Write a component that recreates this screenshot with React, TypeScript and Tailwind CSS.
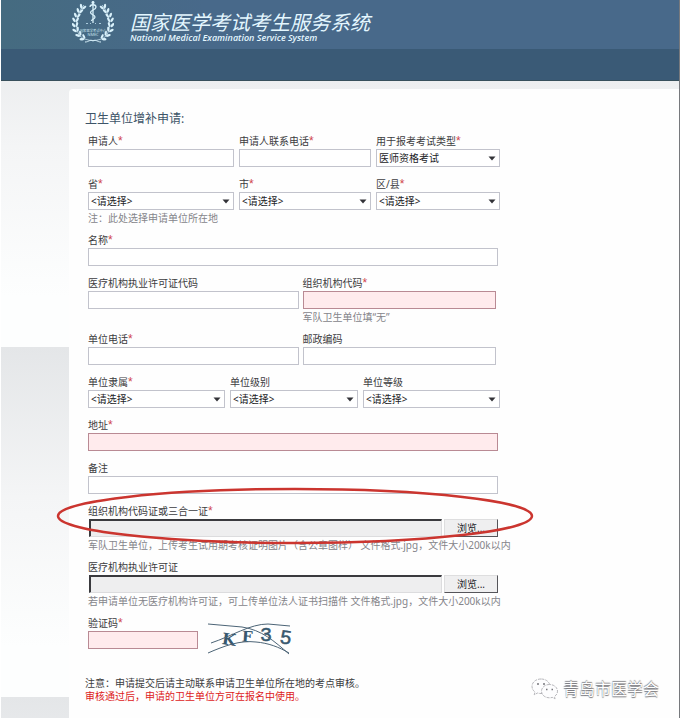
import React, { useRef, useState } from 'react';

interface FieldProps {
  id: string;
  label: string;
  required?: boolean;
  note?: string;
  children: React.ReactNode;
}

const Field: React.FC<FieldProps> = ({ id, label, required, note, children }) => (
  <div className="flex flex-col min-w-0">
    <label htmlFor={id} className="h-4 leading-4 whitespace-nowrap text-[#3c3c40]">
      {label}
      {required && <span className="font-['Liberation_Sans',sans-serif] text-[12px] leading-3 text-[#d0454c]">*</span>}
    </label>
    {children}
    {note && <p className="h-[13px] leading-4 whitespace-nowrap text-[#85858a]">{note}</p>}
  </div>
);

const TextField = ({ invalid, className = '', ...field }: Omit<FieldProps, 'children'> & { invalid?: boolean; className?: string }) => (
  <Field {...field}>
    <input
      id={field.id}
      type="text"
      className={`h-[18px] w-full border px-1 outline-none ${
        invalid ? 'border-[#b98a94] bg-[#ffebed]' : 'border-[#c2c3cc] bg-white'
      } ${className}`}
    />
  </Field>
);

const SelectField = ({ options = ['<请选择>'], ...field }: Omit<FieldProps, 'children'> & { options?: string[] }) => (
  <Field {...field}>
    <div className="relative">
      <select
        id={field.id}
        className="block h-[18px] w-full appearance-none border border-[#c2c3cc] bg-white pl-0.5 pr-4 leading-4 text-[#222226] outline-none"
      >
        {options.map((o) => (
          <option key={o}>{o}</option>
        ))}
      </select>
      <svg className="pointer-events-none absolute right-1 top-[7px]" width="8" height="5" viewBox="0 0 8 5">
        <path d="M0.5 0.5h7L4 4.5z" fill="#333338" />
      </svg>
    </div>
  </Field>
);

const FileField = (field: Omit<FieldProps, 'children'>) => {
  const picker = useRef<HTMLInputElement>(null);
  const [name, setName] = useState('');

  return (
    <Field {...field}>
      <div className="flex h-[18px] gap-0.5 pl-px">
        <input
          id={field.id}
          type="text"
          readOnly
          value={name}
          className="min-w-0 flex-1 border-l-2 border-t-2 border-b border-r border-b-[#dcdcde] border-r-[#dcdcde] border-l-[#3a3a3e] border-t-[#3a3a3e] bg-[#eeeeef] px-1 outline-none"
        />
        <button
          type="button"
          onClick={() => picker.current?.click()}
          className="w-[54px] border border-b-[#55555a] border-r-[#55555a] border-l-[#dededf] border-t-[#dededf] bg-[#efeff0] leading-4 text-[#222226]"
        >
          浏览...
        </button>
        <input ref={picker} type="file" hidden onChange={(e) => setName(e.target.files?.[0]?.name ?? '')} />
      </div>
    </Field>
  );
};

// left half of the wreath, mirrored for the right one
const leaves = [
  [10.5, 7, 20],
  [7.5, 11, 12],
  [5, 15.5, 6],
  [3.6, 20, -4],
  [3.2, 25, -14],
  [4.2, 30, -28],
  [7, 34.5, -44],
  [11, 38, -60],
];

const Wreath = () => (
  <g>
    <path d="M12 5C4 14 2 28 8 36c3 3 8 4.500 13 4.500" fill="none" stroke="#d9f1fb" strokeWidth="0.700" />
    {leaves.map(([x, y, a]) => (
      <g key={y} transform={`translate(${x} ${y}) rotate(${a})`}>
        <ellipse cx="-1.300" cy="-1" rx="1.200" ry="2.500" transform="rotate(-28)" />
        <ellipse cx="1.500" cy="-1" rx="1.100" ry="2.500" transform="rotate(32)" />
      </g>
    ))}
  </g>
);

const Logo = () => (
  <svg width="42" height="44" viewBox="0 0 42 44" fill="#d9f1fb" aria-hidden="true">
    <Wreath />
    <g transform="translate(42 0) scale(-1 1)">
      <Wreath />
    </g>
    <path d="M21 1v22" stroke="#d9f1fb" strokeWidth="1.300" />
    <circle cx="21" cy="2.500" r="1.500" />
    <path
      d="M18 7c0-3 6-3 6 0s-5.500 3-5.500 5.500 4.500 2 4.500 4.500-3.500 2-3.500 4"
      fill="none"
      stroke="#d9f1fb"
      strokeWidth="1.300"
    />
    <path d="M14 23.500h2M18 23.500h1M23 23.500h1M27 23.500h2" stroke="#a9cbdc" strokeWidth="1" />
    <text x="21" y="31.500" textAnchor="middle" fontSize="3.300" fill="#c4e0ec">国家医学考试中心</text>
    <text x="21" y="36" textAnchor="middle" fontSize="3.800" fill="#c4e0ec">NMEC</text>
    <path d="M13 42c4 0 5-3 8-1 3-2 4 1 8 1" fill="none" stroke="#d9f1fb" strokeWidth="1" />
  </svg>
);

const Captcha = () => (
  <svg width="84" height="36" viewBox="0 0 84 36" role="img" aria-label="验证码图片" className="font-['Liberation_Mono',monospace]">
    <g fill="#38586e" fontSize="20" fontWeight="bold">
      <text x="14" y="24" fontFamily="DejaVu Serif" fontSize="16" transform="rotate(8 20 18)">K</text>
      <text x="34" y="21" fontFamily="DejaVu Serif" fontSize="15" transform="rotate(4 41 15)">F</text>
      <text x="52" y="20" fontWeight="normal" stroke="#38586e" strokeWidth="0.500">3</text>
      <text x="72" y="23" fontWeight="normal" stroke="#38586e" strokeWidth="0.500" transform="rotate(8 78 16)">5</text>
    </g>
    <g fill="none" stroke="#4c6476" strokeWidth="1">
      <path d="M0 3l34 3c20 3 32 14 47 27" />
      <path d="M3 22C24 15 42 3 60 3l22 2" />
      <path d="M0 32c16-7 32-13 48-11 12 1 23 5 33 11" />
    </g>
  </svg>
);

const WeChatIcon = () => (
  <svg width="28" height="22" viewBox="0 0 28 22" fill="#fdfdfe" stroke="#a5a5aa" strokeWidth="0.800" strokeDasharray="3 1">
    <path d="M10 1C4.500 1 1 4.500 1 8.500c0 2.300 1.200 4.200 3 5.500l-.8 2.800L6.500 15c1 .3 2.200.5 3.500.5 5.500 0 9-3 9-7S15.500 1 10 1z" />
    <path d="M18.500 6.500c-4.500 0-8 3-8 6.700s3.500 6.600 8 6.600c1 0 2-.1 2.800-.4l2.800 1.500-.7-2.400c1.900-1.200 3.100-3 3.100-5.300 0-3.700-3.500-6.700-8-6.700z" />
    <path d="M6 6h2M12 6h2M15 11.500h1.500M20.500 11.500H22" stroke="#77777c" strokeWidth="1.500" strokeDasharray="none" />
  </svg>
);

export default function App() {
  return (
    <div className="flex min-h-screen flex-col border-r border-[#77797d] bg-white pl-px font-['Noto_Sans','Noto_Sans_CJK_SC',sans-serif] text-[10px]">
      <header>
        <div className="flex h-[49px] items-start bg-[linear-gradient(90deg,#456b80,#48698a_30%,#48698a)] pl-[71px]">
          <Logo />
          <div className="ml-4 pt-2.5 text-[#e4f7ff] italic">
            <h1 className="font-['Noto_Sans_CJK_SC',sans-serif] text-[20px] leading-6 font-normal whitespace-nowrap">
              国家医学考试考生服务系统
            </h1>
            <p className="font-['Open_Sans',sans-serif] text-[9px] leading-2 font-semibold whitespace-nowrap">
              National Medical Examination Service System
            </p>
          </div>
        </div>
        <nav className="h-8 border-b border-[#38505c] bg-[#3a5a76]" />
      </header>

      <div className="flex flex-1 bg-[repeating-linear-gradient(180deg,#e4e6e8_0px,#f4f5f6_150px,#fdfefe_300px,#fdfefe_350px)] bg-[position:0_-84px] bg-[length:100%_900px]">
        <main className="ml-[68px] mt-2 flex-1 rounded-tl-sm bg-[#fefefe] pl-4">
          <h2 className="pt-5 text-[12px] leading-5 text-[#3d5468]">卫生单位增补申请:</h2>

          <form className="ml-[3px] mt-1 flex w-full max-w-[412px] flex-col gap-[9px]" onSubmit={(e) => e.preventDefault()}>
            <div className="grid grid-cols-[146fr_132fr_124fr] gap-[5px]">
              <TextField id="applicant" label="申请人" required />
              <TextField id="applicant-phone" label="申请人联系电话" required />
              <SelectField id="exam-type" label="用于报考考试类型" required options={['医师资格考试']} />
            </div>
            <div className="grid grid-cols-[146fr_132fr_124fr] gap-[5px]">
              <SelectField id="province" label="省" required note="注：此处选择申请单位所在地" />
              <SelectField id="city" label="市" required />
              <SelectField id="district" label="区/县" required />
            </div>
            <div className="pr-0.5">
              <TextField id="org-name" label="名称" required />
            </div>
            <div className="grid grid-cols-[210fr_193fr] gap-1 pr-1">
              <TextField id="licence-code" label="医疗机构执业许可证代码" />
              <TextField id="org-code" label="组织机构代码" required invalid note="军队卫生单位填“无”" />
            </div>
            <div className="grid grid-cols-[210fr_193fr] gap-1 pr-1">
              <TextField id="org-phone" label="单位电话" required />
              <TextField id="postcode" label="邮政编码" />
            </div>
            <div className="grid grid-cols-[137fr_128fr_137fr] gap-[5px]">
              <SelectField id="affiliation" label="单位隶属" required />
              <SelectField id="level" label="单位级别" />
              <SelectField id="grade" label="单位等级" />
            </div>
            <div className="pr-0.5">
              <TextField id="address" label="地址" required invalid />
            </div>
            <div className="pr-0.5">
              <TextField id="remark" label="备注" />
            </div>
            <div className="relative pr-0.5">
              <FileField
                id="org-cert"
                label="组织机构代码证或三合一证"
                required
                note="军队卫生单位，上传考生试用期考核证明图片（含公章图样） 文件格式.jpg，文件大小200k以内"
              />
              {/* hand-drawn highlight around the upload row */}
              <svg className="pointer-events-none absolute -left-8 -top-4 max-w-none" width="480" height="58" viewBox="0 0 480 58">
                <ellipse cx="239" cy="29" rx="237" ry="27" fill="none" stroke="#cb352f" strokeWidth="2.500" />
              </svg>
            </div>
            <div className="pr-0.5">
              <FileField
                id="licence"
                label="医疗机构执业许可证"
                note="若申请单位无医疗机构许可证，可上传单位法人证书扫描件 文件格式.jpg，文件大小200k以内"
              />
            </div>
            <div className="flex h-[42px] gap-2.5">
              <div className="w-[110px]">
                <TextField id="captcha" label="验证码" required invalid />
              </div>
              <div className="pt-1.5">
                <Captcha />
              </div>
            </div>
          </form>

          <div className="flex items-start justify-between pt-4 pr-5">
            <div className="pt-1 leading-[13px] whitespace-nowrap">
              <p className="text-[#3c3c40]">注意：申请提交后请主动联系申请卫生单位所在地的考点审核。</p>
              <p className="text-[#dd1a22]">审核通过后，申请的卫生单位方可在报名中使用。</p>
            </div>
            <div className="flex items-center gap-1 pt-1">
              <WeChatIcon />
              <span className="text-[16px] leading-6 whitespace-nowrap text-white [text-shadow:0_1px_1px_#77777c,0_-1px_1px_#88888c]">
                青岛市医学会
              </span>
            </div>
          </div>
        </main>
      </div>
    </div>
  );
}
